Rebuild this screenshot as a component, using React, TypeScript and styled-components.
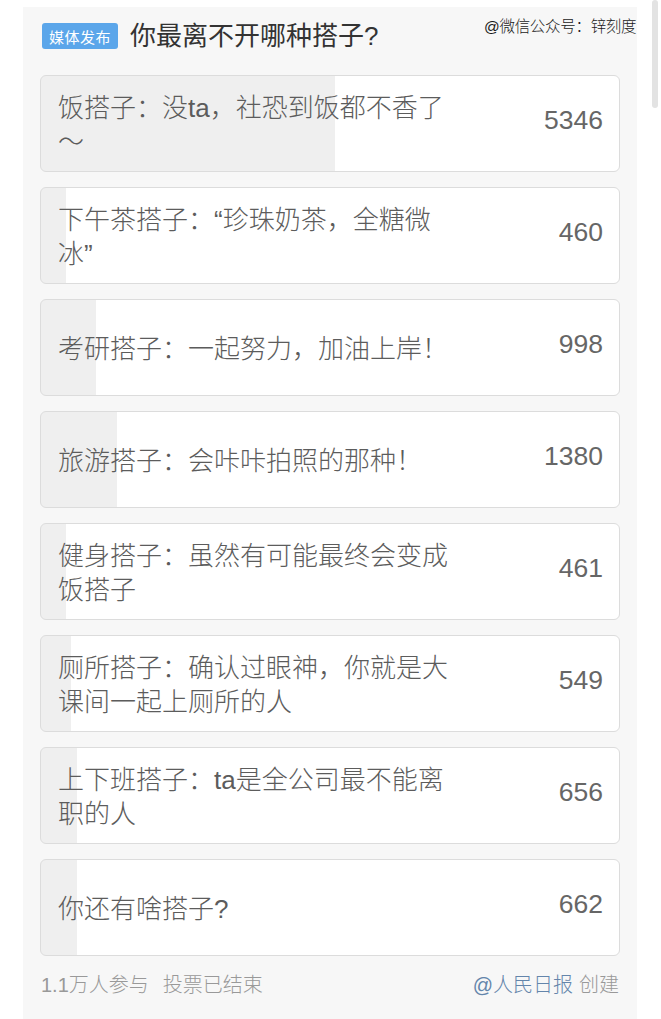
import React from 'react'
import styled, { createGlobalStyle } from 'styled-components'

const GlobalStyle = createGlobalStyle`
    body {
        margin: 0;
        background-color: #ffffff;
        font-family: "Liberation Sans", "Noto Sans CJK SC", sans-serif;
    }
`
const PageWrap = styled.div`
    position: relative;
    width: 661px;
    height: 1019px;
    overflow: hidden;
    background-color: #ffffff;
`
const Panel = styled.div`
    margin: 7px 0 0 23px;
    width: 614px;
    height: 1012px;
    box-sizing: border-box;
    padding: 0 17px;
    background-color: #f7f7f7;
`
const DivHeader = styled.div`
    display: flex;
    align-items: center;
    gap: 12px;
    height: 68px;
    box-sizing: border-box;
    padding: 0 0 10px 2px;
`
const SpanBadge = styled.span`
    display: inline-flex;
    align-items: center;
    justify-content: center;
    height: 26px;
    padding: 0 7px;
    border-radius: 3px;
    background-color: #5ba6ea;
    color: #ffffff;
    font-size: 15px;
    letter-spacing: 0.5px;
`
const Title = styled.h1`
    margin: 0;
    font-size: 26px;
    font-weight: 400;
    color: #333333;
    line-height: 26px;
`
const Watermark = styled.span`
    position: absolute;
    top: 14px;
    left: 484px;
    font-size: 15.5px;
    color: #1a1a1a;
    font-weight: 300;
    letter-spacing: -0.3px;
`
const ScrollThumb = styled.div`
    position: absolute;
    top: 0;
    left: 652px;
    width: 6px;
    height: 108px;
    border-radius: 3px;
    background-color: #e3e3e3;
`
const DivOptions = styled.div`
    display: flex;
    flex-direction: column;
    gap: 15px;
`
const Option = styled.div<{ $share: number }>`
    display: flex;
    align-items: center;
    height: 97px;
    box-sizing: border-box;
    padding: 2px 16px 0 17px;
    border: 1px solid #dcdcdc;
    border-radius: 6px;
    background: linear-gradient(to right, #efefef ${p => p.$share}%, #ffffff ${p => p.$share}%);
`
const SpanLabel = styled.span`
    width: 395px;
    font-size: 26px;
    font-weight: 300;
    line-height: 34px;
    color: #5c5c5c;
`
const SpanCount = styled.span`
    margin-left: auto;
    margin-top: -8px;
    font-size: 26.5px;
    color: #666666;
`
const DivFooter = styled.div`
    display: flex;
    align-items: center;
    margin-top: 16px;
    padding: 0 1px;
    font-size: 20px;
    font-weight: 300;
    line-height: 26px;
    color: #999999;
`
const SpanStatus = styled.span`
    margin-left: 14px;
`
const SpanAuthor = styled.span`
    margin-left: auto;
    color: #6485ab;
`
const SpanCreated = styled.span`
    margin-left: 6px;
`

const options = [
    { label: '饭搭子：没ta，社恐到饭都不香了～', count: 5346 },
    { label: '下午茶搭子：“珍珠奶茶，全糖微冰”', count: 460 },
    { label: '考研搭子：一起努力，加油上岸！', count: 998 },
    { label: '旅游搭子：会咔咔拍照的那种！', count: 1380 },
    { label: '健身搭子：虽然有可能最终会变成饭搭子', count: 461 },
    { label: '厕所搭子：确认过眼神，你就是大课间一起上厕所的人', count: 549 },
    { label: '上下班搭子：ta是全公司最不能离职的人', count: 656 },
    { label: '你还有啥搭子?', count: 662 },
]

function App() {
    const total = options.reduce((sum, o) => sum + o.count, 0)
    return (
        <PageWrap>
            <GlobalStyle />
            <Panel>
                <DivHeader>
                    <SpanBadge>媒体发布</SpanBadge>
                    <Title>你最离不开哪种搭子?</Title>
                </DivHeader>
                <DivOptions>
                    {
                        options.map(option => (
                            <Option key={option.label} $share={(option.count / total) * 100}>
                                <SpanLabel>{option.label}</SpanLabel>
                                <SpanCount>{option.count}</SpanCount>
                            </Option>
                        ))
                    }
                </DivOptions>
                <DivFooter>
                    <span>1.1万人参与</span>
                    <SpanStatus>投票已结束</SpanStatus>
                    <SpanAuthor>@人民日报</SpanAuthor>
                    <SpanCreated>创建</SpanCreated>
                </DivFooter>
            </Panel>
            <Watermark>@微信公众号：锌刻度</Watermark>
            <ScrollThumb />
        </PageWrap>
    )
}

export default App
